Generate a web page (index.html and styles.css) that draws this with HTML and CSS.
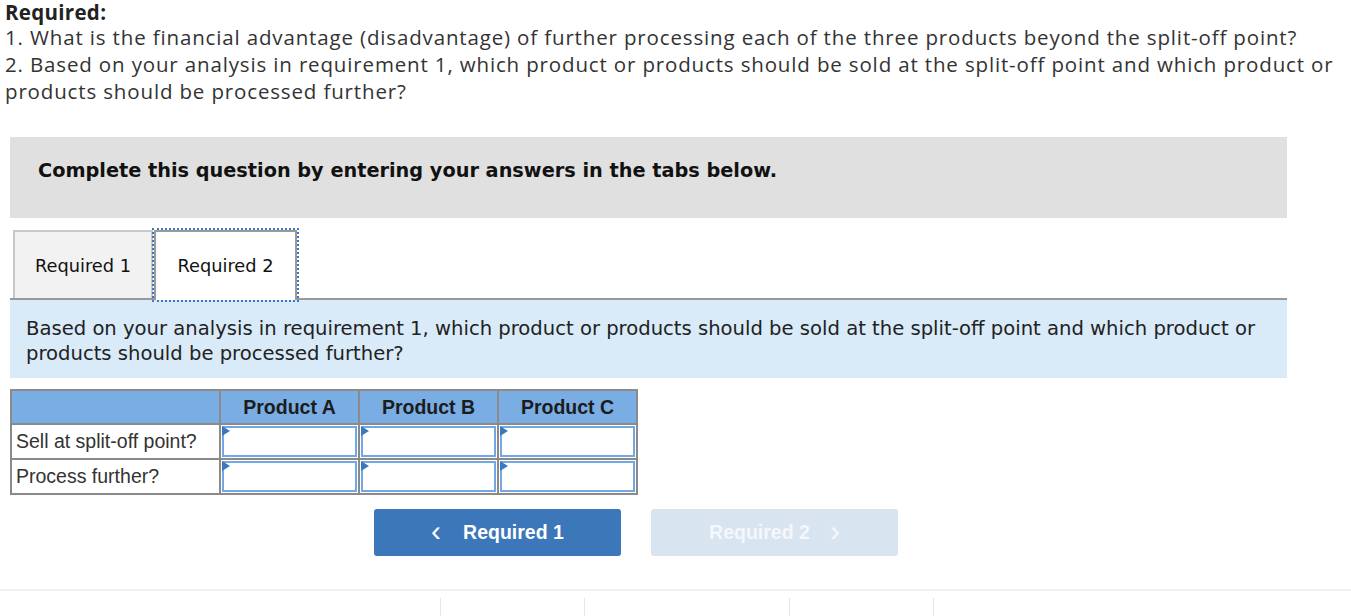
FILE: index.html
```html
<!DOCTYPE html>
<html>
<head>
<meta charset="utf-8">
<link rel="stylesheet" href="styles.css">
</head>
<body>
<div class="page">
  <div class="req">
    <div class="req-title">Required:</div>
    <div class="req-line">1. What is the financial advantage (disadvantage) of further processing each of the three products beyond the split-off point?</div>
    <div class="req-line">2. Based on your analysis in requirement 1, which product or products should be sold at the split-off point and which product or products should be processed further?</div>
  </div>

  <div class="panel">
    <div class="instr">Complete this question by entering your answers in the tabs below.</div>

    <div class="tabs">
      <div class="tab">Required 1</div>
      <div class="tab tab-active">Required 2</div>
    </div>

    <div class="prompt">Based on your analysis in requirement 1, which product or products should be sold at the split-off point and which product or products should be processed further?</div>

    <table class="grid">
      <thead>
        <tr>
          <th class="blank"></th>
          <th>Product A</th>
          <th>Product B</th>
          <th>Product C</th>
        </tr>
      </thead>
      <tbody>
        <tr>
          <td class="label">Sell at split-off point?</td>
          <td class="input"><span class="cell"></span></td>
          <td class="input"><span class="cell"></span></td>
          <td class="input"><span class="cell"></span></td>
        </tr>
        <tr>
          <td class="label">Process further?</td>
          <td class="input"><span class="cell"></span></td>
          <td class="input"><span class="cell"></span></td>
          <td class="input"><span class="cell"></span></td>
        </tr>
      </tbody>
    </table>

    <div class="nav">
      <button class="btn btn-prev"><span class="chev">&#8249;</span>Required 1</button>
      <button class="btn btn-next">Required 2<span class="chev chev-r">&#8250;</span></button>
    </div>
  </div>

  <div class="footer">
    <div class="fcol"></div>
    <div class="fcol"></div>
    <div class="fcol"></div>
    <div class="fcol"></div>
  </div>
</div>
</body>
</html>
```

FILE: styles.css
```css
html, body {
  margin: 0;
  padding: 0;
  background: #ffffff;
}

.page {
  width: 1351px;
  height: 616px;
  overflow: hidden;
}

.req {
  padding-left: 5px;
  padding-top: 1px;
  font-family: "Open Sans", "Lato", sans-serif;
  font-size: 20.5px;
  letter-spacing: 0.85px;
  line-height: 27px;
  color: #333333;
}

.req-title {
  font-weight: bold;
  color: #222222;
  line-height: 23px;
  letter-spacing: 0.3px;
}

.panel {
  margin-left: 10px;
  width: 1277px;
  margin-top: 32px;
}

.instr {
  background: #e0e0e0;
  height: 81px;
  box-sizing: border-box;
  padding: 21px 0 0 28px;
  font-family: "DejaVu Sans", Verdana, sans-serif;
  font-weight: bold;
  font-size: 19.3px;
  line-height: 26px;
  color: #111111;
}

.tabs {
  margin-top: 12px;
  display: flex;
  align-items: flex-end;
  height: 70px;
  border-bottom: 2px solid #999999;
  box-sizing: border-box;
}

.tab {
  box-sizing: border-box;
  height: 69px;
  margin-bottom: -2px;
  display: flex;
  align-items: center;
  justify-content: center;
  font-family: "DejaVu Sans", Verdana, sans-serif;
  font-size: 17.8px;
  color: #111111;
}

.tab:first-child {
  margin-left: 3px;
  width: 140px;
  height: 68px;
  margin-bottom: 0;
  background: #f2f2f2;
  border: 2px solid #c8c8c8;
  border-bottom: none;
}

.tab-active {
  width: 143px;
  margin-left: 1px;
  background: #ffffff;
  border: 2px solid #9a9a9a;
  border-bottom: none;
  outline: 2px dotted #3b78c0;
  outline-offset: 0px;
  height: 70px;
  padding-bottom: 2px;
}

.prompt {
  background: #d9ebf9;
  height: 78px;
  box-sizing: border-box;
  padding: 16px 0 0 16px;
  font-family: "DejaVu Sans", Verdana, sans-serif;
  font-size: 19.6px;
  line-height: 25px;
  color: #222222;
}

.grid {
  margin-top: 11px;
  border-collapse: collapse;
  font-family: "Liberation Sans", Arial, sans-serif;
  font-size: 19.5px;
  color: #222222;
}

.grid th, .grid td {
  border: 2px solid #8a8a8a;
  padding: 0;
}

.grid th {
  background: #79ade4;
  height: 32px;
  width: 137px;
  font-weight: bold;
  color: #1c1c1c;
}

.grid th.blank {
  width: 207px;
}

.grid td {
  height: 33px;
}

.grid td.label {
  padding-left: 4px;
  color: #333333;
}

.grid td.input {
  position: relative;
  background: #ffffff;
}

.cell {
  position: absolute;
  left: 1px;
  top: 1px;
  right: 1px;
  bottom: 1px;
  border: 2px solid #74a8e2;
}

.cell::before {
  content: "";
  position: absolute;
  left: -2px;
  top: -2px;
  border-left: 8px solid #3b78c0;
  border-top: 5px solid transparent;
  border-bottom: 5px solid transparent;
}

.nav {
  margin-top: 14px;
  margin-left: 364px;
  display: flex;
  gap: 30px;
}

.btn {
  width: 247px;
  height: 47px;
  border: none;
  border-radius: 3px;
  font-family: "Liberation Sans", Arial, sans-serif;
  font-weight: bold;
  font-size: 19.5px;
  display: flex;
  align-items: center;
  justify-content: center;
  padding: 0;
}

.btn-prev {
  background: #3b77b9;
  color: #ffffff;
}

.btn-next {
  background: #d9e4f1;
  color: #f4f7fb;
}

.chev {
  font-size: 30px;
  font-weight: normal;
  margin-right: 22px;
  margin-top: -4px;
}

.chev-r {
  margin-right: 0;
  margin-left: 20px;
}

.footer {
  margin-top: 33px;
  border-top: 2px solid #f0f0f0;
  height: 30px;
  display: flex;
  padding-top: 7px;
  box-sizing: border-box;
}

.fcol {
  width: 1px;
  background: #e6e6e6;
  height: 20px;
}

.fcol:nth-child(1) { margin-left: 440px; }
.fcol:nth-child(2) { margin-left: 143px; }
.fcol:nth-child(3) { margin-left: 204px; }
.fcol:nth-child(4) { margin-left: 143px; }
```
